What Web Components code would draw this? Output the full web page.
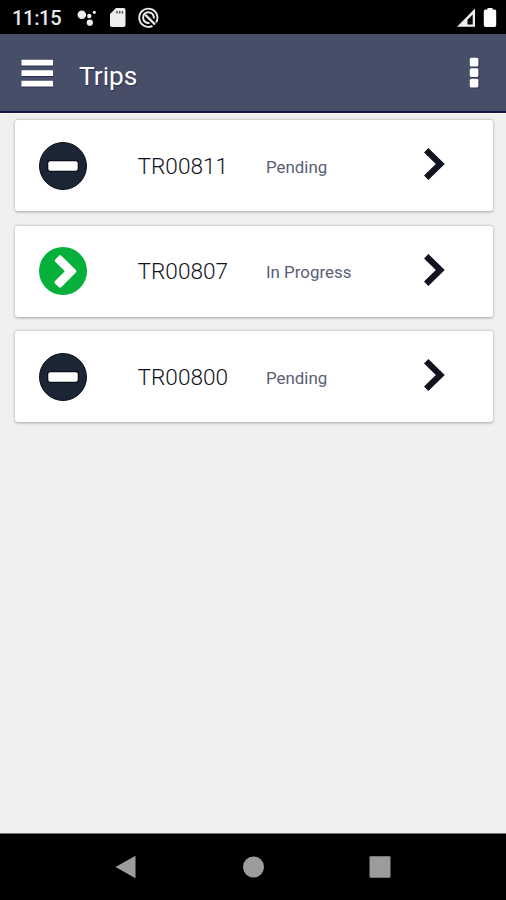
<!DOCTYPE html>
<html lang="en">
<head>
<meta charset="utf-8">
<title>Trips</title>
<style>
html,body{margin:0;height:100%}
body{font-family:Roboto,"Liberation Sans",sans-serif;background:#f0f0f0;overflow:hidden}
</style>
</head>
<body>
<trips-app>
  <status-bar slot="top">11:15</status-bar>
  <app-bar slot="top">Trips</app-bar>
  <trip-card status="pending">TR00811<span slot="status">Pending</span></trip-card>
  <trip-card status="progress">TR00807<span slot="status">In Progress</span></trip-card>
  <trip-card status="pending">TR00800<span slot="status">Pending</span></trip-card>
  <nav-bar slot="bottom"></nav-bar>
</trips-app>
<script>
const define = (name, html) => customElements.define(name, class extends HTMLElement {
  constructor() {
    super();
    this.attachShadow({mode: 'open'}).innerHTML = html;
  }
});

define('trips-app', `
<style>
:host{display:flex;flex-direction:column;height:100vh;background:#f0f0f0}
main{flex:1;display:flex;flex-direction:column;gap:14.500px;padding:6px 13.500px 0 14.500px;border-top:1px solid #fbfbfb;box-sizing:border-box}
</style>
<slot name="top"></slot><main><slot></slot></main><slot name="bottom"></slot>`);

define('status-bar', `
<style>
:host{display:flex;align-items:center;height:34px;box-sizing:border-box;padding:2px 8px 0 12px;background:#000;color:#e6e6e6;font-size:20px;font-weight:500;line-height:32px}
.time{width:65px;letter-spacing:-.300px}
svg{display:block;flex:none}
.gap{flex:1}
</style>
<span class="time"><slot></slot></span>
<svg width="84" height="24" viewBox="77 6 84 24">
  <g fill="#ededed"><circle cx="81.800" cy="14.700" r="4.300"/><circle cx="89.300" cy="16" r="2.200"/><circle cx="94.300" cy="12.300" r="1.600"/><circle cx="89.800" cy="22.700" r="3.100"/>
  <path d="M116 8h7.500a2 2 0 0 1 2 2v15a2 2 0 0 1-2 2H112a2 2 0 0 1-2-2V14z"/></g>
  <path d="M117 11v2.600M119.700 11v2.600M122.400 11v2.600" stroke="#555" stroke-width="1.500"/>
  <g fill="none" stroke="#ededed"><path d="M156 22.600A9.100 9.100 0 1 0 152.500 25.800" stroke-width="1.900"/><path d="M149.500 22.900A5.400 5.400 0 1 1 153.800 18.500" stroke-width="2"/><path d="M145.500 15l9.500 9.500" stroke-width="2.400"/></g>
</svg>
<span class="gap"></span>
<svg width="41" height="24" viewBox="457 6 41 24"><path fill="#ededed" fill-rule="evenodd" d="M457 26.700L475 8.500V26.700zM467.500 24.500h5.200V14.500l-5.200 5.200z"/><path fill="#fff" d="M485.500 9.500h2V8h5v1.500h2a1.700 1.700 0 0 1 1.700 1.700v14a1.700 1.700 0 0 1-1.700 1.700h-9a1.700 1.700 0 0 1-1.700-1.700v-14a1.700 1.700 0 0 1 1.700-1.700z"/></svg>`);

define('app-bar', `
<style>
:host{display:flex;align-items:center;height:79px;box-sizing:border-box;padding:0 26px 0 21px;background:#464e68;border-bottom:2px solid #19184b;color:#fff;font-size:26.300px;line-height:36px}
svg{display:block;flex:none}
.title{flex:1;margin-left:25px;padding-top:7px;text-shadow:1px 1px 1px rgba(29,29,82,.6)}
</style>
<svg width="33" height="30" viewBox="0 -1.500 33 30"><g fill="#1d1d52" opacity=".7"><path d="M1 6h31.500v1H1zM1 16.500h31.500v1H1zM1 27h31.500v1H1z"/></g><g fill="#fff"><rect x=".5" y=".3" width="31.500" height="5.700" rx=".5"/><rect x=".5" y="10.800" width="31.500" height="5.700" rx=".5"/><rect x=".5" y="21.300" width="31.500" height="5.700" rx=".5"/></g></svg>
<span class="title"><slot></slot></span>
<svg width="11" height="32" viewBox="0 0 11 32"><g fill="#1d1d52" opacity=".6"><rect x="2" y="1.500" width="8.500" height="9" rx="2"/><rect x="2" y="12" width="8.500" height="9" rx="2"/><rect x="2" y="22.500" width="8.500" height="9" rx="2"/></g><g fill="#fff"><rect x=".8" y=".8" width="8.600" height="8.800" rx="1.500"/><rect x=".8" y="11.300" width="8.600" height="8.800" rx="1.500"/><rect x=".8" y="21.800" width="8.600" height="8.800" rx="1.500"/></g></svg>`);

define('status-icon', `
<style>
:host{display:block;width:48px;height:48px}
svg{display:none}
:host([kind=pending]) .pending,:host([kind=progress]) .progress{display:block}
</style>
<svg class="pending" width="48" height="48"><circle cx="24" cy="24" r="23.500" fill="#1b2533" stroke="#0e131d"/><rect x="8" y="18" width="32" height="12" rx="3" fill="#0c0f1b"/><rect x="9.300" y="19.300" width="29.400" height="9.500" rx="2" fill="#fff"/></svg>
<svg class="progress" width="48" height="48"><circle cx="24" cy="24" r="24" fill="#06b03a"/><path d="M16.500 12.300L20.200 8.600Q21.200 7.700 22.200 8.600L36.900 23Q38 24.200 36.900 25.400L22.500 40Q21.200 41.300 20 40.300L16 36.400Q14.800 35.200 16 34L25.800 24.200L16 14.600Q15.200 13.500 16.500 12.300z" fill="#fff"/></svg>`);

customElements.define('trip-card', class extends HTMLElement {
  connectedCallback() {
    if (this.shadowRoot) return;
    this.attachShadow({mode: 'open'}).innerHTML = `
<style>
:host{display:flex;align-items:center;height:91px;box-sizing:border-box;padding:0 48px 0 24.500px;background:#fff;border-radius:3px;box-shadow:0 .5px 3px rgba(0,0,0,.32);color:#12121c;font-size:22.600px;line-height:30px}
.id{width:128.500px;margin-left:50.500px;padding-top:2px;font-weight:350}
.state{flex:1;font-size:16.900px;color:#5c5d73;padding-top:2px}
svg{display:block;flex:none;margin-bottom:3px}
</style>
<status-icon kind="${this.getAttribute('status')}"></status-icon>
<span class="id"><slot></slot></span>
<span class="state"><slot name="status"></slot></span>
<svg width="22" height="34" viewBox="0 0 22 34"><path d="M3.200 3.200L17.300 17L3.200 30.800" fill="none" stroke="#10121f" stroke-width="6.200"/></svg>`;
  }
});

define('nav-bar', `
<style>
:host{display:flex;align-items:center;justify-content:space-between;height:67px;box-sizing:border-box;padding:0 115px;background:#000;border-top:1px solid #777}
svg{display:block}
</style>
<svg width="22" height="24"><path d="M.5 12L20.500.8v22.400z" fill="#9c9c9c"/></svg>
<svg width="22" height="24"><circle cx="11.500" cy="12" r="10.500" fill="#9c9c9c"/></svg>
<svg width="22" height="24"><rect x=".5" y="1.300" width="21" height="21.500" rx="1.200" fill="#9c9c9c"/></svg>`);
</script>
</body>
</html>
